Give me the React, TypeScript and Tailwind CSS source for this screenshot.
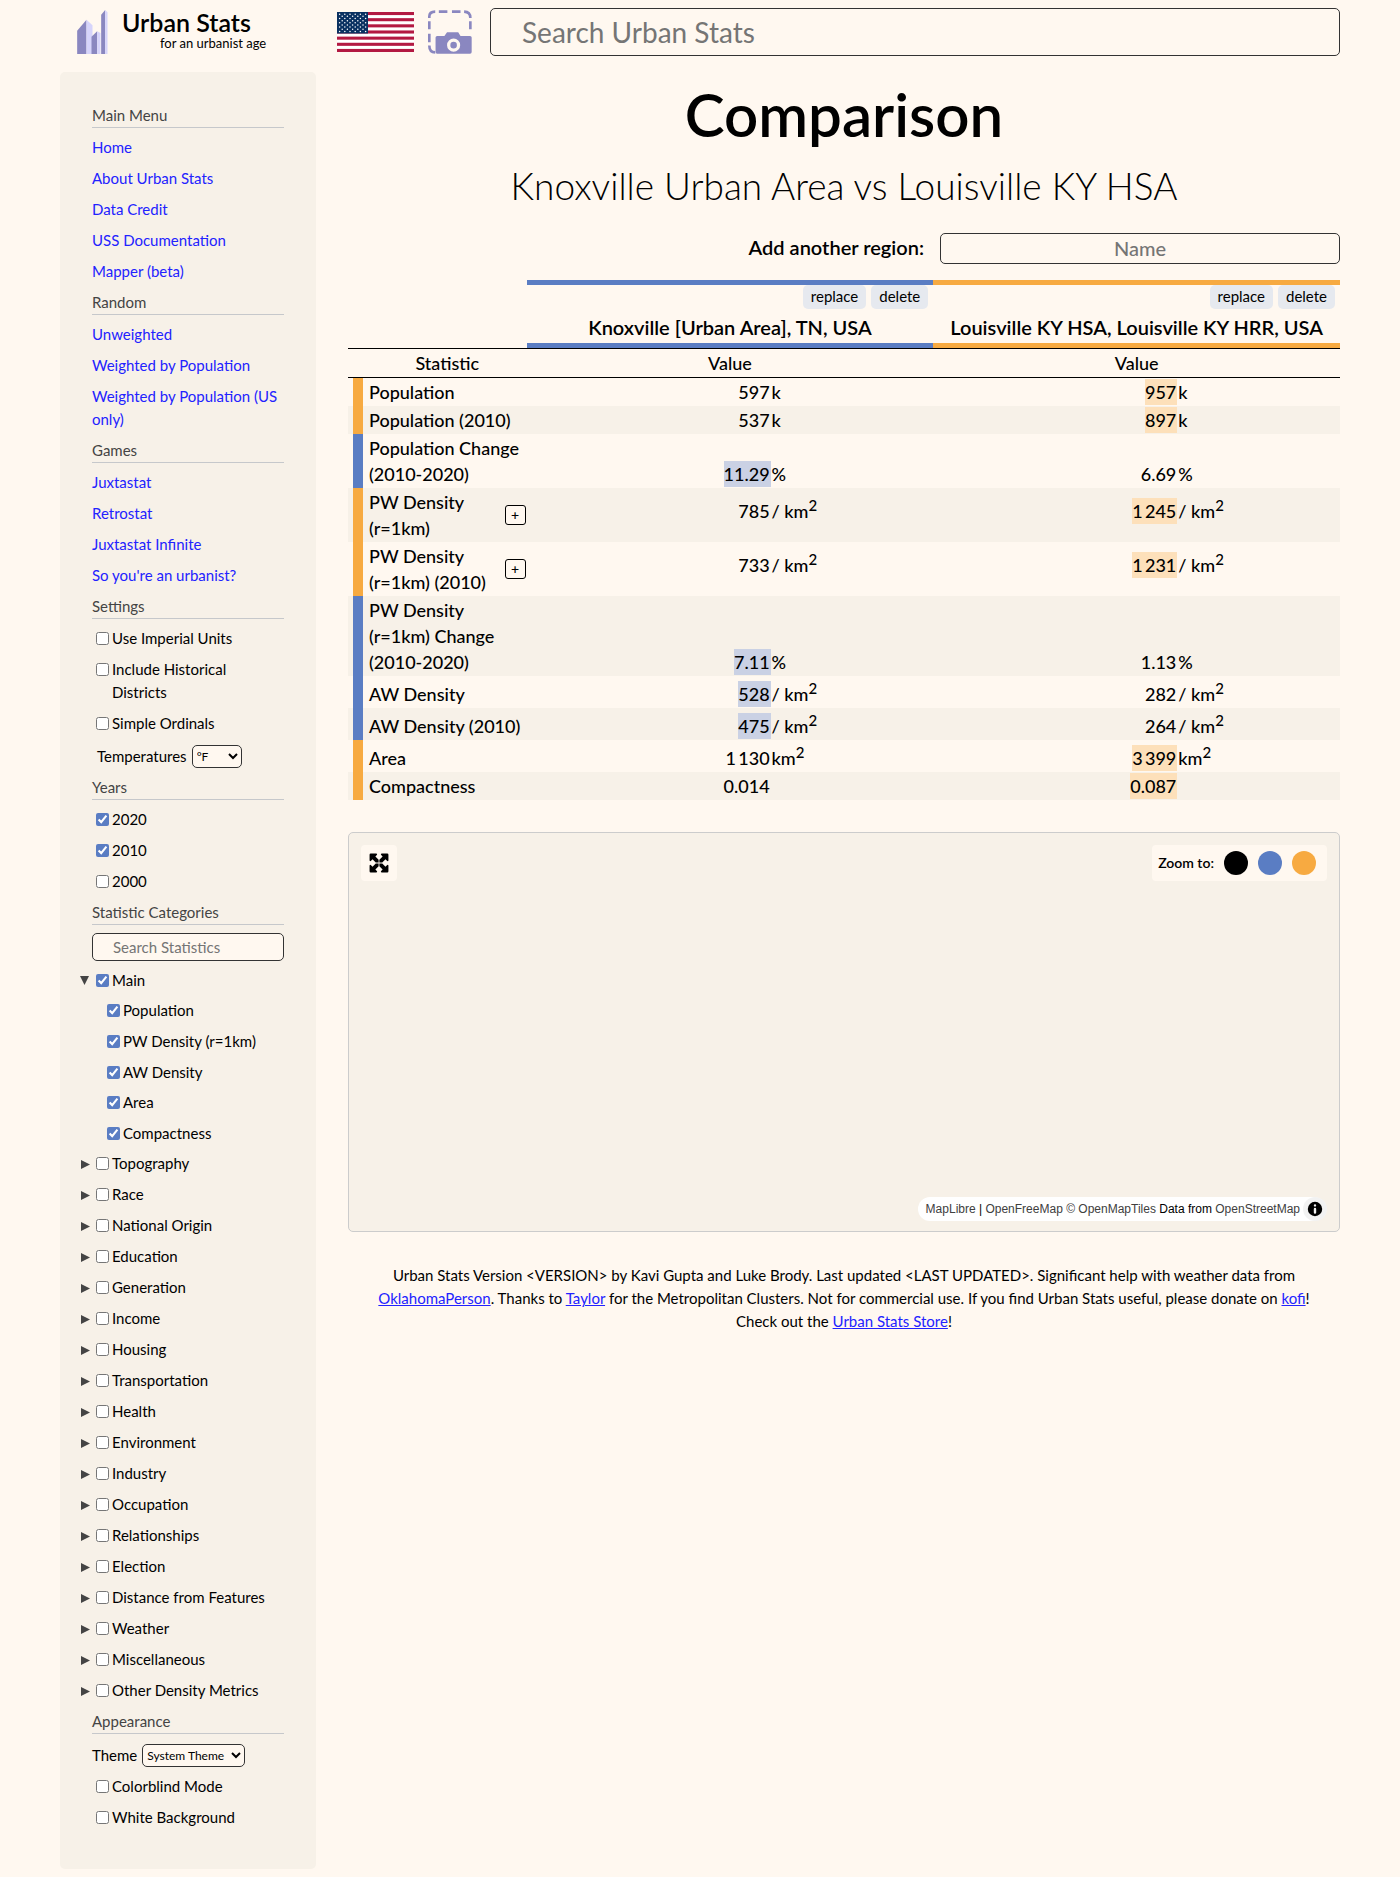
import React, { useState } from 'react'

const CATEGORIES = [
  'Topography', 'Race', 'National Origin', 'Education', 'Generation', 'Income', 'Housing',
  'Transportation', 'Health', 'Environment', 'Industry', 'Occupation', 'Relationships',
  'Election', 'Distance from Features', 'Weather', 'Miscellaneous', 'Other Density Metrics',
]

type Unit = 'k' | '%' | '/ km' | 'km' | ''
type Row = { name: string; values: [string, string]; unit: Unit; winner: 0 | 1; expand?: boolean }

const ROWS: Row[] = [
  { name: 'Population', values: ['597', '957'], unit: 'k', winner: 1 },
  { name: 'Population (2010)', values: ['537', '897'], unit: 'k', winner: 1 },
  { name: 'Population Change (2010-2020)', values: ['11.29', '6.69'], unit: '%', winner: 0 },
  { name: 'PW Density (r=1km)', values: ['785', '1\u2009245'], unit: '/ km', winner: 1, expand: true },
  { name: 'PW Density (r=1km) (2010)', values: ['733', '1\u2009231'], unit: '/ km', winner: 1, expand: true },
  { name: 'PW Density (r=1km) Change (2010-2020)', values: ['7.11', '1.13'], unit: '%', winner: 0 },
  { name: 'AW Density', values: ['528', '282'], unit: '/ km', winner: 0 },
  { name: 'AW Density (2010)', values: ['475', '264'], unit: '/ km', winner: 0 },
  { name: 'Area', values: ['1\u2009130', '3\u2009399'], unit: 'km', winner: 1 },
  { name: 'Compactness', values: ['0.014', '0.087'], unit: '', winner: 1 },
]

function Logo() {
  return (
    <svg viewBox="0 0 92 132" className="h-11 w-[31px]" aria-hidden="true">
      <path d="M0 62 28 29V132H0Z" fill="#8a87c0" />
      <path d="M28 29 46 46V132H28Z" fill="#d6d4fb" />
      <path d="M43 80 60 64V132H43Z" fill="#8a87c0" />
      <path d="M60 64 70 69V132H60Z" fill="#d6d4fb" />
      <path d="M72 14 84 0V132H72Z" fill="#8a87c0" />
      <path d="M84 0 91 7V132H84Z" fill="#d6d4fb" />
    </svg>
  )
}

function Flag() {
  const stars: [number, number][] = []
  for (let r = 0; r < 9; r++) {
    const n = r % 2 === 0 ? 6 : 5
    for (let c = 0; c < n; c++) stars.push([(r % 2 === 0 ? 2.6 : 5.2) + c * 5.2, 2.2 + r * 2.15])
  }
  return (
    <svg viewBox="0 0 77 40" className="h-10 w-[77px]" role="img" aria-label="United States">
      <rect width="77" height="40" fill="#fff" />
      {[0, 1, 2, 3, 4, 5, 6].map(i => (
        <rect key={i} y={(i * 80) / 13} width="77" height={40 / 13} fill="#b31942" />
      ))}
      <rect width="31" height="21.5" fill="#0a3161" />
      {stars.map(([x, y], i) => (
        <circle key={i} cx={x} cy={y} r="0.75" fill="#fff" />
      ))}
    </svg>
  )
}

function ScreenshotIcon() {
  return (
    <svg viewBox="0 0 134 134" className="size-11" aria-hidden="true">
      <g fill="none" stroke="#8a87c0" strokeWidth="8">
        <path d="M4 24V20Q4 5 22 5" />
        <path d="M33 5H59M73 5H99" />
        <path d="M110 5Q129 6 129 24" />
        <path d="M4 34V59M4 72V98M129 34V59" />
        <path d="M4 108Q4 129 22 129" />
      </g>
      <path d="M28 79H50L58 68H92L99 79H128Q133 79 133 84V128Q133 133 128 133H28Q23 133 23 128V84Q23 79 28 79Z" fill="#8a87c0" />
      <circle cx="78" cy="107" r="15" fill="#8a87c0" stroke="#fff8f0" strokeWidth="10" />
    </svg>
  )
}

function ExpandIcon() {
  return (
    <svg viewBox="0 0 448 448" className="size-[22px]" fill="currentColor" aria-hidden="true">
      <path d="M32 56Q32 32 56 32H168Q200 36 180 62L150 92 216 158V216H158L92 150 62 180Q36 200 32 168Z" />
      <path d="M416 56Q416 32 392 32H280Q248 36 268 62L298 92 232 158V216H290L356 150 386 180Q412 200 416 168Z" />
      <path d="M32 392Q32 416 56 416H168Q200 412 180 386L150 356 216 290V232H158L92 298 62 268Q36 248 32 280Z" />
      <path d="M416 392Q416 416 392 416H280Q248 412 268 386L298 356 232 290V232H290L356 298 386 268Q412 248 416 280Z" />
    </svg>
  )
}

function InfoIcon() {
  return (
    <svg viewBox="0 0 20 20" className="size-6" fillRule="evenodd" aria-hidden="true">
      <path d="M4 10a6 6 0 1 0 12 0 6 6 0 1 0-12 0m5-3a1 1 0 1 0 2 0 1 1 0 1 0-2 0m0 3a1 1 0 1 1 2 0v3a1 1 0 1 1-2 0" />
    </svg>
  )
}

function Heading({ children }: { children: React.ReactNode }) {
  return <h2 className="h-6 border-b border-[#c6c8cb] text-[#444444]">{children}</h2>
}

function Check({ label, checked = false }: { label: string; checked?: boolean }) {
  const [on, setOn] = useState(checked)
  return (
    <label className="flex items-start gap-[3px] pl-1">
      <input
        type="checkbox"
        checked={on}
        onChange={e => setOn(e.target.checked)}
        className="mt-[5px] size-[13px] shrink-0 accent-[#5a7dc3]"
      />
      <span>{label}</span>
    </label>
  )
}

function Category({ label, open = false, checked = false }: { label: string; open?: boolean; checked?: boolean }) {
  return (
    <div className="-ml-3 flex">
      <button type="button" aria-label={`Toggle ${label}`} aria-expanded={open} className="flex w-3 items-center">
        <svg viewBox="0 0 11 10" className="h-[10px] w-[11px] shrink-0 text-[#444444]" fill="currentColor" aria-hidden="true">
          <path d={open ? 'M0 0H9L4.500 9Z' : 'M1 1V10L10 5.500Z'} />
        </svg>
      </button>
      <Check label={label} checked={checked} />
    </div>
  )
}

function MenuLinks({ items }: { items: string[] }) {
  return (
    <>
      {items.map(t => (
        <a key={t} href="#" className="text-[#2222ff]">{t}</a>
      ))}
    </>
  )
}

const selectClass = 'h-[23px] rounded-[5px] border border-[#333333] bg-[#fff8f0] text-xs'

function Sidebar() {
  return (
    <nav className="flex w-64 shrink-0 flex-col gap-2 rounded-[5px] bg-[#f7f1e8] px-8 pt-8 pb-10 text-[15px] leading-[23px]">
      <Heading>Main Menu</Heading>
      <MenuLinks items={['Home', 'About Urban Stats', 'Data Credit', 'USS Documentation', 'Mapper (beta)']} />
      <Heading>Random</Heading>
      <MenuLinks items={['Unweighted', 'Weighted by Population', 'Weighted by Population (US only)']} />
      <Heading>Games</Heading>
      <MenuLinks items={['Juxtastat', 'Retrostat', 'Juxtastat Infinite', "So you're an urbanist?"]} />
      <Heading>Settings</Heading>
      <Check label="Use Imperial Units" />
      <Check label="Include Historical Districts" />
      <Check label="Simple Ordinals" />
      <div className="flex h-[25px] items-end gap-[5px] pl-[5px]">
        <label htmlFor="temp">Temperatures</label>
        <select id="temp" className={`${selectClass} w-[50px]`}>
          <option>°F</option>
          <option>°C</option>
        </select>
      </div>
      <Heading>Years</Heading>
      <Check label="2020" checked />
      <Check label="2010" checked />
      <Check label="2000" />
      <Heading>Statistic Categories</Heading>
      <input
        type="text"
        aria-label="Search Statistics"
        placeholder="Search Statistics"
        className="h-7 w-full rounded-[5px] border border-[#333333] bg-[#fff8f0] px-5 placeholder:text-[#757575]"
      />
      <div>
        <Category label="Main" open checked />
        <div className="my-[7px] flex h-[146px] flex-col justify-between pl-[11px]">
          {['Population', 'PW Density (r=1km)', 'AW Density', 'Area', 'Compactness'].map(t => (
            <Check key={t} label={t} checked />
          ))}
        </div>
        <div className="flex flex-col gap-2">
          {CATEGORIES.map(c => (
            <Category key={c} label={c} />
          ))}
        </div>
      </div>
      <Heading>Appearance</Heading>
      <div className="flex h-[25px] items-end gap-[5px]">
        <label htmlFor="theme">Theme</label>
        <select id="theme" className={`${selectClass} w-[103px]`}>
          <option>System Theme</option>
          <option>Light Mode</option>
          <option>Dark Mode</option>
        </select>
      </div>
      <Check label="Colorblind Mode" />
      <Check label="White Background" />
    </nav>
  )
}

function RegionHeader({ name, bar }: { name: string; bar: string }) {
  return (
    <th className={`border-y-[5px] p-0 align-top font-semibold ${bar}`}>
      <div className="flex justify-end gap-[5px] pr-[5px] text-[15px] font-normal">
        <button type="button" className="h-6 rounded-[5px] bg-[#e6e9ef] px-2 pb-[2px] leading-[22px]">replace</button>
        <button type="button" className="h-6 rounded-[5px] bg-[#e6e9ef] px-2 pb-[2px] leading-[22px]">delete</button>
      </div>
      <div className="h-[34px] text-xl leading-[36px] whitespace-nowrap">{name}</div>
    </th>
  )
}

function Value({ row, index }: { row: Row; index: 0 | 1 }) {
  const mark = row.winner !== index ? '' : index === 0 ? 'bg-[#cad1e4]' : 'bg-[#fde0ba]'
  const place = row.expand ? 'align-middle pb-[9px]' : 'align-bottom pb-px'
  return (
    <td className={`px-0 pt-px ${place}`}>
      <div className="flex gap-px">
        <div className="flex w-3/5 justify-end">
          <span className={`pr-px ${mark}`}>{row.values[index]}</span>
        </div>
        <span>
          {row.unit}
          {row.unit.includes('km') && <sup className="text-[15px]">2</sup>}
        </span>
      </div>
    </td>
  )
}

function StatsTable() {
  return (
    <table className="mt-4 w-full table-fixed border-separate border-spacing-0 text-lg leading-[26px] font-medium">
      <colgroup>
        <col className="w-[18%]" />
        <col className="w-[41%]" />
        <col className="w-[41%]" />
      </colgroup>
      <thead>
        <tr>
          <td />
          <RegionHeader name="Knoxville [Urban Area], TN, USA" bar="border-[#5a7dc3]" />
          <RegionHeader name="Louisville KY HSA, Louisville KY HRR, USA" bar="border-[#f7aa41]" />
        </tr>
        <tr>
          <th className="h-[30px] border-y border-black py-0 pr-0 pl-5 font-medium">Statistic</th>
          <th className="border-y border-black p-0 font-medium">Value</th>
          <th className="border-y border-black p-0 font-medium">Value</th>
        </tr>
      </thead>
      <tbody>
        {ROWS.map(row => (
          <tr key={row.name} className="even:bg-[#f7f1e8]">
            <th scope="row" className="h-px p-0 text-left font-medium">
              <div className={`ml-[5px] flex h-full border-l-[10px] pl-[6px] ${row.winner === 0 ? 'border-[#5a7dc3]' : 'border-[#f7aa41]'}`}>
                <span className={`flex-1 self-end pb-px ${row.unit.includes('km') && !row.expand ? 'pt-[5px]' : 'pt-px'}`}>{row.name}</span>
                {row.expand && (
                  <button
                    type="button"
                    aria-label={`Expand ${row.name}`}
                    className="mr-px flex h-5 w-[21px] items-center justify-center self-center rounded-[3px] border border-black bg-[#fff8f0] text-sm"
                  >
                    +
                  </button>
                )}
              </div>
            </th>
            <Value row={row} index={0} />
            <Value row={row} index={1} />
          </tr>
        ))}
      </tbody>
    </table>
  )
}

function MapPanel() {
  return (
    <section aria-label="Map" className="mt-8 flex h-[400px] flex-col justify-between rounded-[5px] border border-[#cccccc] bg-[#f7f1e8] px-3 pt-3 pb-[10px]">
      <div className="flex justify-between">
        <button type="button" aria-label="Full screen" className="flex size-9 items-center justify-center rounded-[4px] bg-[#fff8f0]">
          <ExpandIcon />
        </button>
        <div className="flex h-9 items-center gap-[10px] rounded-[4px] bg-[#fff8f0] pr-[11px] pl-[6px]">
          <span className="text-sm font-semibold">Zoom to:</span>
          <button type="button" aria-label="Zoom to all" className="size-6 rounded-full bg-black" />
          <button type="button" aria-label="Zoom to Knoxville" className="size-6 rounded-full bg-[#5a7dc3]" />
          <button type="button" aria-label="Zoom to Louisville" className="size-6 rounded-full bg-[#f7aa41]" />
        </div>
      </div>
      <div className="flex h-6 items-center self-end rounded-full bg-white pl-2 font-['Liberation_Sans',sans-serif] text-xs text-black">
        <span className="pr-[3px]">
          <a href="#" className="text-[#404040]">MapLibre</a> |{' '}
          <a href="#" className="text-[#404040]">OpenFreeMap</a>{' '}
          <a href="#" className="text-[#404040]">© OpenMapTiles</a> Data from{' '}
          <a href="#" className="text-[#404040]">OpenStreetMap</a>
        </span>
        <button type="button" aria-label="Toggle attribution" className="size-6 rounded-full bg-black/5">
          <InfoIcon />
        </button>
      </div>
    </section>
  )
}

function FooterLink({ children }: { children: React.ReactNode }) {
  return <a href="#" className="text-[#2222ff] underline">{children}</a>
}

export default function App() {
  return (
    <div className="min-h-screen bg-[#fff8f0] px-[60px] pt-2 pb-2 font-['Lato',sans-serif] text-base text-black">
      <header className="flex h-12 items-center">
        <a href="#" className="flex w-[277px] shrink-0 items-center gap-[14px] pl-[17px]">
          <Logo />
          <span className="flex flex-col pb-[6px]">
            <span className="text-[25px] leading-7 font-semibold">Urban Stats</span>
            <span className="pl-[38px] text-[13px] leading-[14px]">for an urbanist age</span>
          </span>
        </a>
        <button type="button" aria-label="Universe" className="shrink-0"><Flag /></button>
        <button type="button" aria-label="Screenshot" className="ml-[14px] shrink-0"><ScreenshotIcon /></button>
        <input
          type="text"
          aria-label="Search Urban Stats"
          placeholder="Search Urban Stats"
          className="ml-[18px] h-12 min-w-0 flex-1 rounded-[5px] border border-[#333333] bg-[#fff8f0] px-[31px] text-[28px] placeholder:text-[#757575]"
        />
      </header>
      <div className="mt-4 flex gap-8">
        <Sidebar />
        <main className="min-w-0 flex-1">
          <h1 className="mt-1 text-center text-[60px] leading-[76px] font-semibold">Comparison</h1>
          <p className="text-center text-[37px] leading-[68px] font-light">Knoxville Urban Area vs Louisville KY HSA</p>
          <div className="mt-[13px] flex items-center justify-end gap-4 text-xl font-medium">
            <label htmlFor="region" className="pb-[3px] font-semibold">Add another region:</label>
            <input
              id="region"
              type="text"
              placeholder="Name"
              className="h-[31px] w-[400px] rounded-[5px] border border-[#333333] bg-[#fff8f0] pb-[2px] text-center placeholder:text-[#757575]"
            />
          </div>
          <StatsTable />
          <MapPanel />
          <footer className="mt-8 px-4 text-center text-[15px] leading-[23px]">
            Urban Stats Version &lt;VERSION&gt; by Kavi Gupta and Luke Brody. Last updated &lt;LAST UPDATED&gt;. Significant
            help with weather data from <FooterLink>OklahomaPerson</FooterLink>. Thanks to <FooterLink>Taylor</FooterLink> for
            the Metropolitan Clusters. Not for commercial use. If you find Urban Stats useful, please donate
            on <FooterLink>kofi</FooterLink>! Check out the <FooterLink>Urban Stats Store</FooterLink>!
          </footer>
        </main>
      </div>
    </div>
  )
}
